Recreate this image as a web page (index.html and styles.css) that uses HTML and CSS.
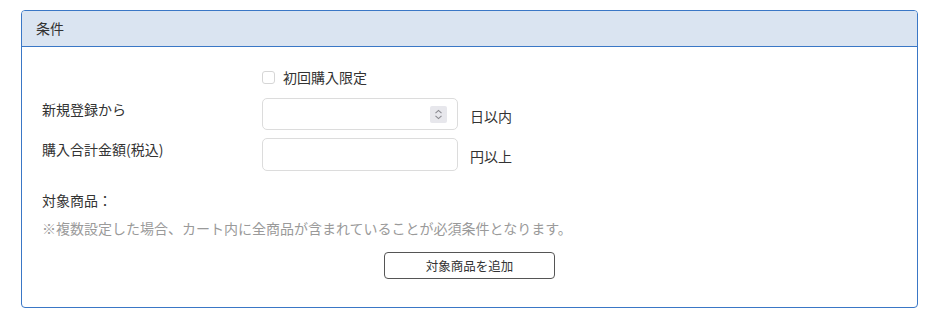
FILE: index.html
```html
<!DOCTYPE html>
<html lang="ja">
<head>
<meta charset="UTF-8">
<title>条件</title>
<link rel="stylesheet" href="styles.css">
</head>
<body>

<div class="page">
  <section class="panel">
    <div class="panel-head">条件</div>
    <div class="panel-body">
      <div class="row check-row">
        <div class="label"></div>
        <label class="check"><input type="checkbox"><span>初回購入限定</span></label>
      </div>
      <div class="row">
        <div class="label">新規登録から</div>
        <div class="field">
          <input type="text">
          <span class="spin">
            <svg width="17" height="17" viewBox="0 0 17 17"><path d="M5.5 7.2 8.5 4.4 11.5 7.2M5.5 9.8 8.5 12.6 11.5 9.8" fill="none" stroke="#8a8a90" stroke-width="1.1"/></svg>
          </span>
        </div>
        <span class="unit">日以内</span>
      </div>
      <div class="row">
        <div class="label">購入合計金額(税込)</div>
        <div class="field"><input type="text"></div>
        <span class="unit">円以上</span>
      </div>

      <div class="target">
        <p class="target-title">対象商品：</p>
        <p class="note">※複数設定した場合、カート内に全商品が含まれていることが必須条件となります。</p>
        <div class="actions">
          <button class="add-btn">対象商品を追加</button>
        </div>
      </div>
    </div>
  </section>
</div>

</body>
</html>
```
FILE: styles.css
```css
:root{
  --blue:#3a77c6;
  --head:#dae4f1;
  --text:#333;
  --muted:#9a9a9a;
  --line:#dcdcdc;
}
body{
  margin:0;
  font-family:"Noto Sans CJK JP","Noto Sans",sans-serif;
  font-size:14px;
  color:var(--text);
  background:#fff;
}
.page{padding:10px 22px 0 21px;}

.panel{
  border:1px solid var(--blue);
  border-radius:4px;
  overflow:hidden;
}
.panel-head{
  background:var(--head);
  border-bottom:1px solid var(--blue);
  height:35px;
  line-height:35px;
  padding:0 14px;
}
.panel-body{padding:20px 20px 28px;}

.row{
  display:flex;
  align-items:center;
  margin-bottom:8px;
}
.label{
  width:220px;
  flex:none;
  align-self:flex-start;
  line-height:21px;
  padding-top:1px;
}
.check-row{margin-bottom:10px;}
.check{
  display:flex;
  align-items:center;
  gap:8px;
  line-height:21px;
}
.check input{
  appearance:none;
  margin:0;
  width:13px;
  height:13px;
  border:1px solid #d6d6d6;
  border-radius:3px;
  background:#fff;
}

.field{
  display:flex;
  align-items:center;
  width:196px;
  height:32px;
  border:1px solid var(--line);
  border-radius:5px;
  padding-right:10px;
  box-sizing:border-box;
}
.row:nth-child(3) .field{height:33px;}
.field input{
  flex:1;
  min-width:0;
  border:none;
  outline:none;
  background:none;
  font:inherit;
  padding:0 10px;
}
.spin{
  display:flex;
  width:17px;
  height:17px;
  background:#e7e7ec;
  border-radius:2px;
}
.unit{
  margin-left:12px;
  padding-top:3px;
}

.target{margin-top:19px;}
.target p{margin:0;line-height:21px;}
.note{
  color:var(--muted);
  margin-top:7px !important;
}
.actions{
  display:flex;
  justify-content:center;
  margin-top:13px;
}
.add-btn{
  width:171px;
  height:27px;
  background:#fff;
  border:1px solid #555;
  border-radius:4px;
  font-family:inherit;
  font-size:12.5px;
  color:var(--text);
  cursor:pointer;
}
```
